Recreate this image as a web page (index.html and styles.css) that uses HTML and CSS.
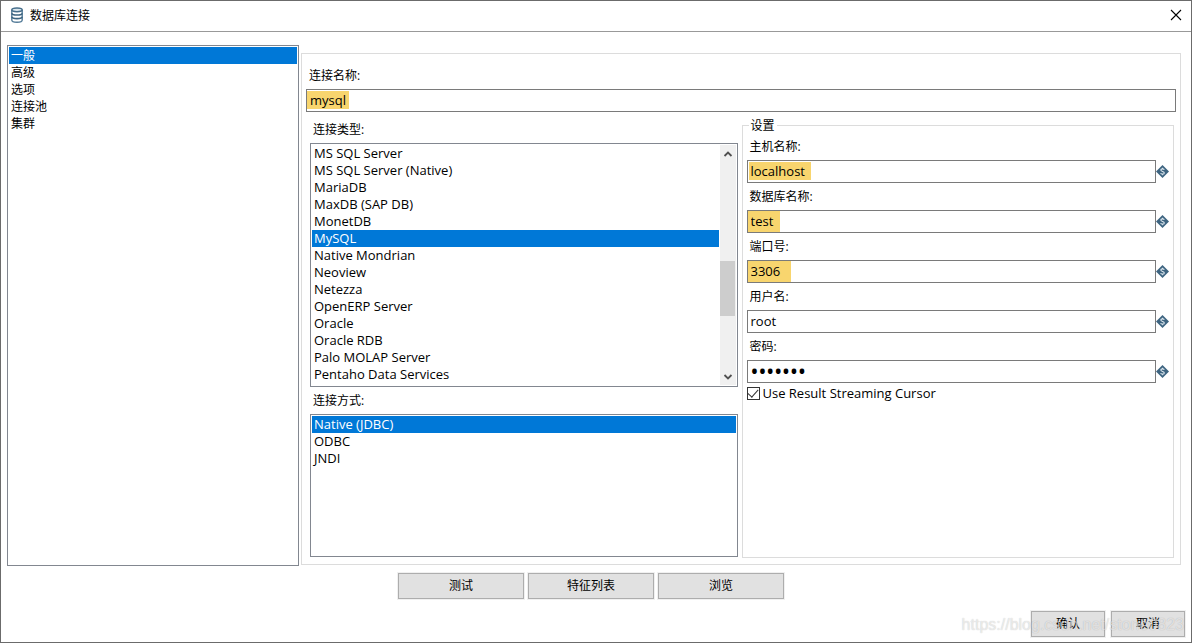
FILE: index.html
```html
<!DOCTYPE html>
<html lang="zh-CN">
<head>
<meta charset="utf-8">
<title>数据库连接</title>
<link rel="stylesheet" href="styles.css">
</head>
<body>
<svg class="defs" aria-hidden="true">
  <symbol id="var" viewBox="0 0 13 13">
    <path d="M6.500 0 13 6.500 6.500 13 0 6.500Z" fill="#3d6480"/>
    <path d="M8.300 4.800C8 4.200 7.400 3.900 6.500 3.900 5.500 3.900 4.800 4.300 4.800 5.100 4.800 6.800 8.300 6.200 8.300 7.900 8.300 8.700 7.500 9.100 6.500 9.100 5.600 9.100 4.900 8.800 4.600 8.100M6.500 2.800V4M6.500 9V10.200" fill="none" stroke="#dfe9f0" stroke-width="1.100"/>
  </symbol>
</svg>
<div class="window">
  <header class="titlebar">
    <svg class="db-icon" viewBox="0 0 12 16" aria-hidden="true">
      <path d="M.8 3v10c0 1.300 2.200 2.200 5.200 2.200s5.200-.9 5.200-2.200V3" fill="#fff" stroke="#537b98" stroke-width="1.400"/>
      <path d="M1 6.200c0 1.200 2.200 1.800 5 1.800s5-.6 5-1.800M1 9.800c0 1.200 2.200 1.800 5 1.800s5-.6 5-1.800" fill="none" stroke="#3d6480" stroke-width="1.700"/>
      <ellipse cx="6" cy="2.800" rx="5.200" ry="1.900" fill="#dce8ef" stroke="#456d8a" stroke-width="1.500"/>
    </svg>
    <h1 class="title">数据库连接</h1>
    <button class="close" type="button" aria-label="关闭">
      <svg viewBox="0 0 12 12" aria-hidden="true"><path d="M1 1l10 10M11 1 1 11" stroke="#000" stroke-width="1.100"/></svg>
    </button>
  </header>

  <main class="content">
    <ul class="listbox nav" role="listbox" aria-label="类别" tabindex="0">
      <li class="option selected" role="option" aria-selected="true">一般</li>
      <li class="option" role="option">高级</li>
      <li class="option" role="option">选项</li>
      <li class="option" role="option">连接池</li>
      <li class="option" role="option">集群</li>
    </ul>

    <section class="panel">
      <label class="label" for="conn-name">连接名称:</label>
      <input class="text-input mark mark-name" id="conn-name" type="text" value="mysql">
      <div class="columns">
        <div class="left">
          <p class="label" id="type-label">连接类型:</p>
          <div class="listbox types">
            <ul class="options" role="listbox" aria-labelledby="type-label" tabindex="0">
              <li class="option" role="option">MS SQL Server</li>
              <li class="option" role="option">MS SQL Server (Native)</li>
              <li class="option" role="option">MariaDB</li>
              <li class="option" role="option">MaxDB (SAP DB)</li>
              <li class="option" role="option">MonetDB</li>
              <li class="option selected" role="option" aria-selected="true">MySQL</li>
              <li class="option" role="option">Native Mondrian</li>
              <li class="option" role="option">Neoview</li>
              <li class="option" role="option">Netezza</li>
              <li class="option" role="option">OpenERP Server</li>
              <li class="option" role="option">Oracle</li>
              <li class="option" role="option">Oracle RDB</li>
              <li class="option" role="option">Palo MOLAP Server</li>
              <li class="option" role="option">Pentaho Data Services</li>
            </ul>
            <div class="scrollbar" aria-hidden="true">
              <svg class="arrow" viewBox="0 0 16 17"><path d="M4.500 11 8 7.500l3.500 3.500" fill="none" stroke="#505050" stroke-width="1.800"/></svg>
              <div class="track"><div class="thumb"></div></div>
              <svg class="arrow" viewBox="0 0 16 17"><path d="M4.500 7 8 10.500 11.500 7" fill="none" stroke="#505050" stroke-width="1.800"/></svg>
            </div>
          </div>
          <p class="label method-label" id="method-label">连接方式:</p>
          <ul class="listbox methods" role="listbox" aria-labelledby="method-label" tabindex="0">
            <li class="option selected" role="option" aria-selected="true">Native (JDBC)</li>
            <li class="option" role="option">ODBC</li>
            <li class="option" role="option">JNDI</li>
          </ul>
        </div>

        <fieldset class="settings">
          <legend class="legend">设置</legend>
          <label class="label" for="host">主机名称:</label>
          <div class="field"><input class="text-input mark mark-host" id="host" type="text" value="localhost"><svg class="var"><use href="#var"/></svg></div>
          <label class="label" for="db">数据库名称:</label>
          <div class="field"><input class="text-input mark mark-db" id="db" type="text" value="test"><svg class="var"><use href="#var"/></svg></div>
          <label class="label" for="port">端口号:</label>
          <div class="field"><input class="text-input mark mark-port" id="port" type="text" value="3306"><svg class="var"><use href="#var"/></svg></div>
          <label class="label" for="user">用户名:</label>
          <div class="field"><input class="text-input" id="user" type="text" value="root"><svg class="var"><use href="#var"/></svg></div>
          <label class="label" for="pass">密码:</label>
          <div class="field"><input class="text-input password" id="pass" type="password" value="1234567"><svg class="var"><use href="#var"/></svg></div>
          <label class="check"><input class="checkbox" type="checkbox" checked>Use Result Streaming Cursor</label>
        </fieldset>
      </div>
    </section>
  </main>

  <div class="actions">
    <button class="button wide" type="button">测试</button>
    <button class="button wide" type="button">特征列表</button>
    <button class="button wide" type="button">浏览</button>
  </div>
  <footer class="footer">
    <button class="button" type="button">确认</button>
    <button class="button" type="button">取消</button>
    <span class="watermark">https://blog.csdn.net/stone0823</span>
  </footer>
</div>
</body>
</html>
```
FILE: styles.css
```css
* {
  box-sizing: border-box;
}

body {
  margin: 0;
  background: #fff;
  color: #000;
  font: 13px/17px "Open Sans", "Noto Sans CJK SC", sans-serif;
}

button,
input {
  font: inherit;
  color: inherit;
}

.defs {
  display: none;
}

.window {
  display: flex;
  flex-direction: column;
  min-height: 100vh;
  border: 1px solid #6b6b6b;
}

.titlebar {
  display: flex;
  align-items: center;
  gap: 7px;
  height: 31px;
  padding: 0 9px 2px 10px;
  border-bottom: 1px solid #999;
}

.db-icon {
  width: 12px;
  height: 16px;
}

.title {
  flex: 1;
  margin: 0;
  font-size: 12px;
  font-weight: 400;
}

.close {
  display: flex;
  padding: 0;
  border: 0;
  background: none;
}

.close svg {
  width: 12px;
  height: 12px;
}

.content {
  flex: 1;
  display: grid;
  grid-template-columns: 73fr 220fr;
  gap: 2px;
  padding: 13px 10px 0 6px;
}

.listbox {
  margin: 0;
  padding: 1px;
  border: 1px solid #828790;
  list-style: none;
}

.nav {
  font-size: 12px;
}

.option {
  height: 17px;
  padding: 0 2px;
}

.selected {
  background: #0078d7;
  color: #fff;
}

.panel {
  display: flex;
  flex-direction: column;
  margin: 8px 0 1px;
  padding: 13px 4px 6px;
  border: 1px solid #dcdcdc;
}

.label {
  margin: 0;
  padding-left: 3px;
  font-size: 12px;
  line-height: 17px;
}

.text-input {
  width: 100%;
  height: 23px;
  padding: 0 3px 2px;
  border: 1px solid #7a7a7a;
  border-radius: 0;
  background-color: #fff;
  outline: 0;
}

.password {
  font: 21px/17px "Noto Sans", sans-serif;
}

.panel > .text-input {
  margin-top: 5px;
}

.mark {
  background-image: linear-gradient(#f8d56e, #f8d56e);
  background-repeat: no-repeat;
}

.mark-name {
  background-position: 0 1px;
  background-size: 42px 18px;
}

.mark-host {
  background-position: 1px 1px;
  background-size: 62px 18px;
}

.mark-db {
  background-size: 32px 100%;
}

.mark-port {
  background-size: 43px 100%;
}

.columns {
  flex: 1;
  display: grid;
  grid-template-columns: 428fr 433fr;
  gap: 4px;
  padding: 6px 2px 0 4px;
}

.left {
  display: flex;
  flex-direction: column;
  padding: 3px 0 1px;
}

.types {
  display: flex;
  margin-top: 5px;
}

.options {
  flex: 1;
  margin: 0;
  padding: 0 0 2px;
  list-style: none;
}

.scrollbar {
  display: flex;
  flex-direction: column;
  width: 17px;
  border-left: 1px solid #fff;
  background: #f0f0f0;
}

.arrow {
  width: 16px;
  height: 17px;
}

.track {
  flex: 1;
  padding-top: 99px;
}

.thumb {
  width: 15px;
  height: 55px;
  background: #cdcdcd;
}

.method-label {
  margin-top: 5px;
}

.methods {
  flex: 1;
  margin-top: 5px;
}

.settings {
  min-width: 0;
  margin: 0;
  padding: 0 4px 6px;
  border: 1px solid #dcdcdc;
}

.legend {
  margin-left: 2px;
  padding: 0 2px;
  font-size: 12px;
  line-height: 15px;
}

.settings .label {
  display: block;
  margin: 5px 0;
}

.field {
  display: flex;
  align-items: center;
}

.var {
  flex: none;
  width: 13px;
  height: 13px;
}

.check {
  display: flex;
  align-items: center;
  gap: 3px;
  margin-top: 2px;
}

.checkbox {
  appearance: none;
  display: grid;
  place-items: center;
  width: 13px;
  height: 13px;
  margin: 0;
  border: 1px solid #333;
  background: #fff;
}

.checkbox:checked::after {
  content: "";
  width: 5px;
  height: 9px;
  margin-top: -3px;
  border: solid #333;
  border-width: 0 1px 1px 0;
  transform: rotate(42deg);
}

.actions {
  display: flex;
  justify-content: center;
  gap: 4px;
  padding: 7px 10px 0 0;
}

.button {
  width: 74px;
  height: 26px;
  padding: 0 0 1px;
  border: 1px solid #adadad;
  border-radius: 0;
  background: #e1e1e1;
  box-shadow: 0 0 0 1px #f0f0f0;
  font-size: 12px;
}

.wide {
  width: 126px;
}

.footer {
  position: relative;
  display: flex;
  justify-content: flex-end;
  gap: 6px;
  padding: 12px 6px 5px;
}

.watermark {
  position: absolute;
  right: 7px;
  bottom: 7px;
  color: rgba(255, 255, 255, 0.6);
  font: 16px/20px "Liberation Sans", sans-serif;
  text-shadow: 0 0 1px rgba(0, 0, 0, 0.25);
  pointer-events: none;
}
```
